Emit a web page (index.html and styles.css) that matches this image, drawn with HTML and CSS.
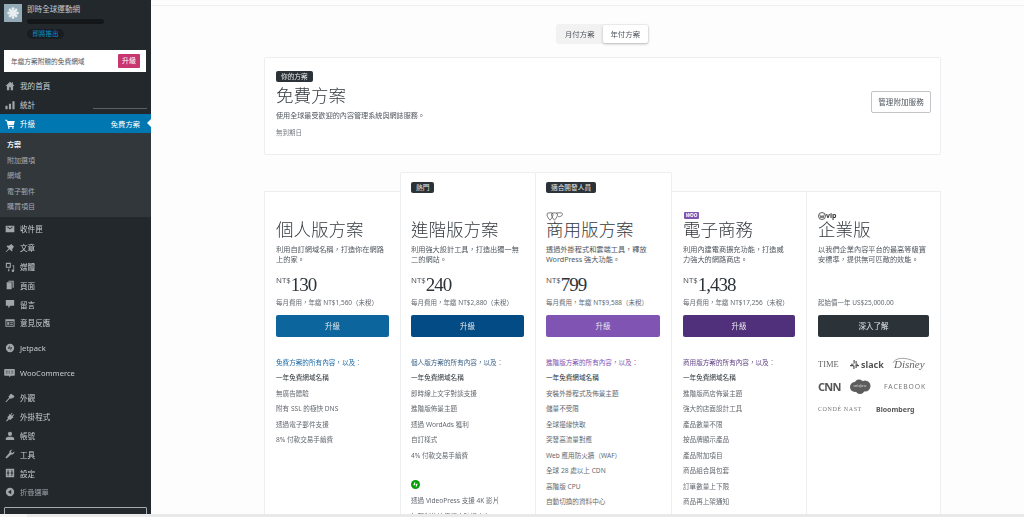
FILE: index.html
```html
<!DOCTYPE html>
<html lang="zh-Hant">
<head>
<meta charset="utf-8">
<title>升級</title>
<link rel="stylesheet" href="styles.css">
</head>
<body>
<div class="app">
<aside class="side">
  <div class="site">
    <div class="site-icon"><svg viewBox="0 0 18 18" width="18" height="18"><circle cx="9" cy="9" r="3.6" fill="#e8edf0"/><g fill="#e8edf0"><circle cx="9" cy="4.6" r="1.4"/><circle cx="9" cy="13.4" r="1.4"/><circle cx="4.6" cy="9" r="1.4"/><circle cx="13.4" cy="9" r="1.4"/><circle cx="5.9" cy="5.9" r="1.3"/><circle cx="12.1" cy="5.9" r="1.3"/><circle cx="5.9" cy="12.1" r="1.3"/><circle cx="12.1" cy="12.1" r="1.3"/></g></svg></div>
    <div class="site-info">
      <div class="site-name">即時全球運動網</div>
      <div class="site-mask"></div>
      <div class="site-pill">即將推出</div>
    </div>
  </div>
  <div class="promo"><span>年繳方案附贈的免費網域</span><b class="promo-btn">升級</b></div>

  <nav class="menu">
    <a class="item"><svg class="ic" viewBox="0 0 12 12"><path d="M6 1 .6 6h1.7v5h2.8V7.6h1.8V11h2.8V6h1.7L9.5 3.8V1.6H8.3v1.1z"/></svg>我的首頁</a>
    <a class="item item-stats"><svg class="ic" viewBox="0 0 12 12"><path d="M.5 7h2.6v4H.5zM4.7 4.500h2.6V11H4.700zM8.900 1.500h2.600V11H8.900z"/></svg>統計<i class="stats-line"></i></a>
    <a class="item item-on"><svg class="ic" viewBox="0 0 12 12"><path d="M.3 1h2.2l.5 1.500h8.700l-1.200 5H4.200l.3 1h6.200v1H3.700L1.800 2H.3z"/><circle cx="4.600" cy="10.700" r="1"/><circle cx="9.400" cy="10.700" r="1"/></svg>升級<span class="item-side">免費方案</span></a>
    <div class="sub">
      <a class="sub-item sub-on">方案</a>
      <a class="sub-item">附加選項</a>
      <a class="sub-item">網域</a>
      <a class="sub-item">電子郵件</a>
      <a class="sub-item">購買項目</a>
    </div>
    <div class="group group-first">
      <a class="item"><svg class="ic" viewBox="0 0 12 12"><path d="M.8 2h10.400v8H.8zM2 3.200 6 6.400l4-3.200H8.600L6 5.200 3.400 3.200z" fill-rule="evenodd"/></svg>收件匣</a>
      <a class="item"><svg class="ic" viewBox="0 0 12 12"><path d="M7.200.8 11.200 4.800 10 5.200 8.600 7.800 9 9.600 7.900 10 5.300 7.400 1.200 11 .8 10.600 4.400 6.500 2 4.100 2.400 3 4.200 3.400 6.800 2z"/></svg>文章</a>
      <a class="item"><svg class="ic" viewBox="0 0 12 12"><path d="M1 1h6v6H1zM2.300 2.300v3.400h3.400V2.300zM9 4h2v6.500a1.500 1.500 0 1 1-1.500-1.500H10V5.200H9zM4 7.700h1.200V11H3.500V10H4z" fill-rule="evenodd"/></svg>媒體</a>
      <a class="item"><svg class="ic" viewBox="0 0 12 12"><path d="M4 .8h6.500v8.600H9V2.200H4zM2 2.800h6V11.200H2z"/></svg>頁面</a>
      <a class="item"><svg class="ic" viewBox="0 0 12 12"><path d="M1 1.200h10v7H6.500L4 11V8.200H1z"/></svg>留言</a>
      <a class="item"><svg class="ic" viewBox="0 0 12 12"><path d="M.5 1.500h11v9H.5zM1.600 3.800v5.600h8.800V3.800zM2.600 5h2.600v3.200H2.600zM6.200 5h3.200v1H6.200zM6.200 7h3.200v1H6.200z" fill-rule="evenodd"/></svg>意見反應</a>
    </div>
    <div class="group">
      <a class="item"><svg class="ic" viewBox="0 0 12 12"><path d="M6 1a5 5 0 1 0 0 10A5 5 0 0 0 6 1zM5.500 2.600v4.200H3.400zM6.500 9.400V5.200h2.100z" fill-rule="evenodd"/></svg>Jetpack</a>
    </div>
    <div class="group">
      <a class="item item-woo"><svg class="ic-woo" viewBox="0 0 12 10"><path d="M1 .6h10a.8.8 0 0 1 .8.8v5.800a.8.8 0 0 1-.8.8H7.400L6 9.600 5.500 8H1a.8.8 0 0 1-.8-.8V1.400a.8.8 0 0 1 .8-.8z"/><path d="M2 3h2M5 3h1.500M8 3h2M2 5h2M5 5h1.500M8 5h2" stroke="#23282d" stroke-width=".7"/></svg>WooCommerce</a>
    </div>
    <div class="group">
      <a class="item"><svg class="ic" viewBox="0 0 12 12"><path d="M7.500.8 11.400 4 9.400 6.500 8.700 5.800 7 7.300 6 6.300 1.500 11.200.6 10.500 5 5.400 4 4.500 5.600 3 5.200 2.500z"/></svg>外觀</a>
      <a class="item"><svg class="ic" viewBox="0 0 12 12"><path d="M8.200 1 9 1.700 7.300 3.600 8.400 4.600 10.200 2.800 11 3.600 9.200 5.500 10.200 6.500 9.500 7.200 9.100 6.900 6.800 9.300 4.600 9 2.300 11.300 1.300 10.600 3.400 8 3 6 5.300 3.500 4.800 3 5.600 2.300 6.500 3.200z"/></svg>外掛程式</a>
      <a class="item"><svg class="ic" viewBox="0 0 12 12"><circle cx="6" cy="3.500" r="2.500"/><path d="M1 8.200 4 6.800h4l3 1.400v2.600H1z"/></svg>帳號</a>
      <a class="item"><svg class="ic" viewBox="0 0 12 12"><path d="M11 2.700 9 4.700 7.500 4.300 7.100 2.800 9 .9A3 3 0 0 0 5.300 4.600L.9 9.600a1 1 0 0 0 1.400 1.400l5-4.400A3 3 0 0 0 11 2.700z"/></svg>工具</a>
      <a class="item"><svg class="ic" viewBox="0 0 12 12"><path d="M1 1h10v10H1zM3.200 2.500v3H2.200v1h1v3h1v-3h1v-1h-1v-3zM7.800 2.500v3H6.800v1h1v3h1v-3h1v-1h-1v-3z" fill-rule="evenodd"/></svg>設定</a>
      <a class="item item-fold"><svg class="ic" viewBox="0 0 12 12"><path d="M6 1a5 5 0 1 0 0 10A5 5 0 0 0 6 1zM7.500 3.200v5.600L3.600 6z" fill-rule="evenodd"/></svg>折疊選單</a>
    </div>
  </nav>
  <div class="side-box"></div>
</aside>

<main class="main">
  <div class="topline"></div>
  <div class="content">
    <div class="toggle-row">
      <div class="toggle"><span class="tog">月付方案</span><span class="tog tog-on">年付方案</span></div>
    </div>

    <section class="current">
      <div>
        <span class="tag">你的方案</span>
        <h1 class="cur-title">免費方案</h1>
        <p class="cur-desc">使用全球最受歡迎的內容管理系統與網誌服務。</p>
        <p class="cur-exp">無到期日</p>
      </div>
      <span class="ghost-btn">管理附加服務</span>
    </section>

    <section class="plans">
      <article class="plan">
        <div class="head"></div>
        <h2 class="plan-name">個人版方案</h2>
        <p class="plan-desc">利用自訂網域名稱&#xFF0C;打造你在網路<br>上的家。</p>
        <div class="price"><sup>NT$</sup>130</div>
        <p class="note">每月費用&#xFF0C;年繳 NT$1,560&#xFF08;未稅&#xFF09;</p>
        <span class="cta cta-1">升級</span>
        <h3 class="fhead fh-1">免費方案的所有內容&#xFF0C;以及&#xFF1A;</h3>
        <ul class="feats">
          <li class="first">一年免費網域名稱</li><li>無廣告體驗</li><li>附有 SSL 的極快 DNS</li><li>透過電子郵件支援</li><li>8% 付款交易手續費</li>
        </ul>
      </article>

      <article class="plan plan-hi">
        <div class="head"><span class="tag">熱門</span></div>
        <h2 class="plan-name">進階版方案</h2>
        <p class="plan-desc">利用強大設計工具&#xFF0C;打造出獨一無<br>二的網站。</p>
        <div class="price"><sup>NT$</sup>240</div>
        <p class="note">每月費用&#xFF0C;年繳 NT$2,880&#xFF08;未稅&#xFF09;</p>
        <span class="cta cta-2">升級</span>
        <h3 class="fhead fh-2">個人版方案的所有內容&#xFF0C;以及&#xFF1A;</h3>
        <ul class="feats">
          <li class="first">一年免費網域名稱</li><li>即時線上文字對談支援</li><li>進階版佈景主題</li><li>透過 WordAds 獲利</li><li>自訂樣式</li><li>4% 付款交易手續費</li>
        </ul>
        <svg class="jp" viewBox="0 0 10 10"><circle cx="5" cy="5" r="5" fill="#069e08"/><path d="M4.600 1.500v4.300H2.400zM5.400 8.500V4.200h2.200z" fill="#fff"/></svg>
        <ul class="feats feats-after">
          <li>透過 VideoPress 支援 4K 影片</li><li>無限制的垃圾留言防護中心</li>
        </ul>
      </article>

      <article class="plan plan-hi">
        <div class="head">
          <span class="tag">適合開發人員</span>
          <svg class="logo-biz" viewBox="0 0 17 9" fill="none" stroke="#444" stroke-width=".7"><path d="M3 .8a2 2 0 0 0-2 2.200C1.300 5 3 7 4 8.200 5 7 6.700 5 7 3 7.200 1.800 6.300.8 5 .8 4.200.8 3.600 1 3 .8z"/><path d="M7.500.8a2 2 0 0 0-2 2.200C5.800 5 7.500 7 8.500 8.200 9.500 7 11.200 5 11.500 3 11.700 1.800 10.800.8 9.500.8 8.700.8 8.100 1 7.500.8z"/><path d="M12 .8c-.9 0-1.600.6-1.900 1.300M12 .8h3c1.200 0 1.800 1 1.400 2-.5 1.300-2.400 2-4.400 2"/></svg>
        </div>
        <h2 class="plan-name">商用版方案</h2>
        <p class="plan-desc">透過外掛程式和雲端工具&#xFF0C;釋放<br>WordPress 強大功能。</p>
        <div class="price"><sup>NT$</sup>799</div>
        <p class="note">每月費用&#xFF0C;年繳 NT$9,588&#xFF08;未稅&#xFF09;</p>
        <span class="cta cta-3">升級</span>
        <h3 class="fhead fh-3">進階版方案的所有內容&#xFF0C;以及&#xFF1A;</h3>
        <ul class="feats">
          <li class="first">一年免費網域名稱</li><li>安裝外掛程式及佈景主題</li><li>儲量不受限</li><li>全球邊緣快取</li><li>突發高流量對應</li><li>Web 應用防火牆&#xFF08;WAF&#xFF09;</li><li>全球 28 處以上 CDN</li><li>高階版 CPU</li><li>自動切換的資料中心</li>
        </ul>
      </article>

      <article class="plan">
        <div class="head"><span class="woo">WOO</span></div>
        <h2 class="plan-name">電子商務</h2>
        <p class="plan-desc">利用內建電商擴充功能&#xFF0C;打造威<br>力強大的網路商店。</p>
        <div class="price"><sup>NT$</sup>1,438</div>
        <p class="note">每月費用&#xFF0C;年繳 NT$17,256&#xFF08;未稅&#xFF09;</p>
        <span class="cta cta-4">升級</span>
        <h3 class="fhead fh-4">商用版方案的所有內容&#xFF0C;以及&#xFF1A;</h3>
        <ul class="feats">
          <li class="first">一年免費網域名稱</li><li>進階版商店佈景主題</li><li>強大的店面設計工具</li><li>產品數量不限</li><li>按品牌顯示產品</li><li>產品附加項目</li><li>商品組合與包套</li><li>訂單數量上下限</li><li>商品再上架通知</li>
        </ul>
      </article>

      <article class="plan plan-ent">
        <div class="head"><span class="vip"><svg viewBox="0 0 8 8" width="8" height="8"><circle cx="4" cy="4" r="3.500" fill="none" stroke="#333" stroke-width=".8"/><path d="M1.800 2.500 3 6l1-2.500L5 6l1.200-3.500" fill="none" stroke="#333" stroke-width=".7"/></svg>vip</span></div>
        <h2 class="plan-name">企業版</h2>
        <p class="plan-desc">以我們企業內容平台的最高等級寶<br>安標準&#xFF0C;提供無可匹敵的效能。</p>
        <div class="price"></div>
        <p class="note">起始價一年 US$25,000.00</p>
        <span class="cta cta-5">深入了解</span>
        <div class="brands">
          <span class="b-time">TIME</span>
          <span class="b-slack"><svg viewBox="0 0 9 9" width="9" height="9" fill="#555"><path d="M3.500 0h1.200v3.500H3.500zM5.500 1h1.200v2.500H5.500zM0 5h3.500v1.200H0zM1 3.700h2.500v1H1zM5.500 5H9v1.200H5.500zM5.500 3.700H8v1H5.500zM4.500 5.500v3.500H3.300V5.500zM6.700 5.500V8H5.500V5.500z"/></svg>slack</span>
          <span class="b-disney"><svg class="disney-arc" viewBox="0 0 32 10" fill="none" stroke="#666" stroke-width=".6"><path d="M1 8C3 3 12 1 24 7"/></svg>Disney</span>
          <span class="b-cnn">CNN</span>
          <span class="b-sf"><svg class="sf-cloud" viewBox="0 0 22 15" fill="#5c5c5c"><circle cx="6" cy="8" r="5"/><circle cx="10" cy="5" r="4.500"/><circle cx="16" cy="7" r="5.500"/><circle cx="11" cy="10.500" r="4.500"/></svg><em>salesforce</em></span>
          <span class="b-fb">FACEBOOK</span>
          <span class="b-conde">CONDÉ NAST</span>
          <span class="b-bloom">Bloomberg</span>
        </div>
      </article>
    </section>
  </div>
</main>
</div>
<div class="bottom"></div>
</body>
</html>
```
FILE: styles.css
```css
* { box-sizing: border-box; }
html, body { margin: 0; height: 517px; overflow: hidden; }
body { background: #fdfdfd; font-family: "Noto Sans", "Noto Sans CJK TC", sans-serif; color: #50575e; font-size: 7px; }
p, h1, h2, h3, ul { margin: 0; padding: 0; }
ul { list-style: none; }

.app { display: flex; height: 517px; filter: blur(.35px); }

/* sidebar */
.side { width: 151px; flex: none; height: 517px; background: #23282d; color: #c8cdd2; overflow: hidden; display: flex; flex-direction: column; }
.site { flex: none; height: 50px; padding: 4px 0 0 4px; display: flex; gap: 5px; }
.site-icon { width: 18px; height: 18px; background: #93aab7; }
.site-info { flex: 1; }
.site-name { font-size: 7.600px; line-height: 11px; color: #c5cacf; white-space: nowrap; }
.site-mask { width: 77px; height: 5px; margin-top: 4px; border-radius: 3px; background: #14171a; }
.site-pill { width: 37px; height: 10px; margin-top: 5px; border-radius: 5px; background: #191d21; color: #0a93c9; font-size: 6.500px; line-height: 10px; text-align: center; }
.promo { flex: none; height: 22px; margin: 0 5px 4px 4px; padding: 0 6px 0 7px; background: #fff; color: #50575e; font-size: 6.700px; display: flex; align-items: center; justify-content: space-between; }
.promo-btn { width: 22px; height: 14px; border-radius: 1px; background: #c9356e; color: #fff; font-size: 7px; font-weight: 400; line-height: 14px; text-align: center; }

.menu { flex: none; display: flex; flex-direction: column; }
.item { position: relative; height: 19px; padding-left: 5px; display: flex; align-items: center; gap: 5px; font-size: 7.600px; color: #c8cdd2; white-space: nowrap; }
.group .item { height: 18.800px; }
.ic { width: 10px; height: 10px; flex: none; fill: #a0a5aa; }
.ic-woo { width: 11px; height: 10px; flex: none; fill: #a0a5aa; margin-left: -1px; }
.stats-line { position: absolute; left: 93px; right: 4px; top: 13px; height: 1px; background: #5b6066; }
.item-on { background: #0077b1; color: #fff; }
.item-on .ic { fill: #fff; }
.item-on::after { content: ""; position: absolute; right: 0; top: 5px; border: 4.500px solid transparent; border-right-color: #fdfdfd; border-left-width: 0; }
.item-side { margin-left: auto; margin-right: 11px; font-size: 7.300px; }
.sub { height: 84px; padding-top: 4px; background: #32373c; }
.sub-item { display: block; height: 15.500px; padding-left: 7px; font-size: 7px; line-height: 15.500px; color: #a5aab0; }
.sub-on { color: #eceef0; font-weight: 700; }
.group { margin-top: 6.200px; }
.group-first { margin-top: 2.600px; }
.item-fold { color: #9aa0a5; font-size: 7.200px; }
.side-box { flex: none; height: 20px; margin: 5.600px 4px 0; border: 1px solid #a5aab0; border-radius: 1px; }

/* main */
.main { flex: 1; min-width: 0; }
.topline { height: 6px; border-bottom: 1px solid #f0f0f0; }
.content { width: 677px; margin-left: 113px; }
.toggle-row { padding-top: 18px; display: flex; justify-content: center; }
.toggle { width: 93px; height: 20px; padding: 1px; border-radius: 3px; background: #f2f2f2; display: flex; justify-content: space-between; }
.tog { flex: 1; font-size: 7.400px; line-height: 18px; text-align: center; color: #50575e; }
.tog-on { background: #fff; border-radius: 2px; box-shadow: 0 1px 3px rgba(0,0,0,.25); }

.current { height: 98px; margin-top: 13px; padding: 13px 9px 0 11px; background: #fff; border: 1px solid #eceeef; border-radius: 2px; display: flex; justify-content: space-between; align-items: flex-start; }
.tag { display: inline-block; height: 11px; padding: 0 5px; border-radius: 2px; background: #2c3338; color: #e8eaeb; font-size: 6.700px; line-height: 11px; white-space: nowrap; }
.cur-title { font-size: 17.500px; line-height: 22px; margin-top: 2px; font-weight: 300; color: #33393e; font-family: "Noto Sans CJK TC", sans-serif; }
.cur-desc { font-size: 7.100px; line-height: 10px; margin-top: 4px; color: #50575e; }
.cur-exp { font-size: 6.500px; line-height: 10px; margin-top: 8px; color: #787c82; }
.ghost-btn { margin-top: 20px; width: 60px; height: 22px; background: #fff; border: 1px solid #c3c4c7; border-radius: 2px; font-size: 7.600px; line-height: 20px; text-align: center; color: #50575e; }

.plans { margin-top: 17px; display: grid; grid-template-columns: 136px 135px 136px 135px 135px; align-items: start; }
.plan { height: 330px; margin-top: 19px; padding: 0 11px; background: #fff; border: 1px solid #eceeef; border-width: 1px 0 0 1px; }
.plan-hi { margin-top: 0; height: 349px; border-width: 1px 1px 0 1px; border-radius: 2px 2px 0 0; margin-right: -1px; position: relative; z-index: 1; padding-left: 10px; }
.plan-ent { border-right-width: 1px; }
.head { height: 26px; position: relative; }
.plan-hi .head { height: 45px; padding-top: 9px; }
.logo-biz { position: absolute; left: 0; top: 39px; width: 17px; height: 9px; }
.woo { position: absolute; left: 1px; top: 20px; width: 15px; height: 7px; border-radius: 1px; background: #7f54b3; color: #fff; font-size: 5px; font-style: italic; font-weight: 700; line-height: 7px; text-align: center; }
.vip { position: absolute; left: 0; top: 20px; display: flex; align-items: center; color: #333; font-size: 7px; font-weight: 700; line-height: 8px; }
.plan-name { font-size: 17.500px; line-height: 22px; font-weight: 300; color: #33393e; white-space: nowrap; font-family: "Noto Sans CJK TC", sans-serif; }
.plan-desc { height: 19px; margin-top: 5px; font-size: 7.200px; line-height: 9.500px; white-space: nowrap; color: #50575e; }
.price { height: 24px; margin-top: 8px; font-family: "Liberation Serif", serif; font-size: 19px; letter-spacing: -1px; line-height: 26px; color: #2c3338; white-space: nowrap; }
.price sup { font-family: "Noto Sans", sans-serif; font-size: 7.800px; letter-spacing: 0; line-height: 0; vertical-align: 8px; color: #50575e; }
.note { height: 9px; margin-top: 2px; font-size: 6.500px; line-height: 9px; white-space: nowrap; color: #646970; }
.cta { display: block; height: 22px; margin-top: 8px; border-radius: 2px; color: #e6e8ea; font-size: 7.500px; line-height: 22px; text-align: center; }
.cta-1 { background: #0d659e; }
.cta-2 { background: #024b84; }
.cta-3 { background: #7f54b3; }
.cta-4 { background: #50307a; }
.cta-5 { background: #2c3338; }
.fhead { margin-top: 21px; height: 10px; font-size: 6.600px; font-weight: 400; line-height: 10px; white-space: nowrap; }
.fh-1 { color: #1d6ba7; }
.fh-2 { color: #3a5f85; }
.fh-3 { color: #7f54b3; }
.fh-4 { color: #5f4185; }
.feats { margin-top: 2px; }
.feats-after { margin-top: 4px; }
.feats li { height: 15.500px; font-size: 6.600px; line-height: 15.500px; white-space: nowrap; color: #646970; }
.feats li.first { color: #2c3338; }
.jp { display: block; width: 9px; height: 9px; margin-top: 17px; }

.brands { margin-top: 16px; display: grid; grid-template-columns: 33px 43px 36px; grid-auto-rows: 22.500px; align-items: center; color: #666; white-space: nowrap; }
.b-time { font-family: "Liberation Serif", serif; font-size: 8.500px; }
.b-slack { display: flex; align-items: center; gap: 2px; font-size: 9px; font-weight: 700; margin-left: -1px; color: #555; }
.b-disney { position: relative; font-family: "Liberation Serif", serif; font-style: italic; font-size: 11px; }
.disney-arc { position: absolute; left: -2px; top: -3px; width: 32px; height: 10px; }
.b-cnn { font-size: 11px; font-weight: 700; letter-spacing: -.8px; color: #555; }
.b-sf { position: relative; width: 22px; height: 15px; margin-left: -2px; color: #ddd; font-size: 3px; line-height: 15px; text-align: center; }
.b-sf em { position: relative; }
.sf-cloud { position: absolute; left: 0; top: 0; width: 22px; height: 15px; }
.b-fb { margin-left: -10px; font-size: 6.800px; letter-spacing: .9px; color: #777; }
.b-conde { grid-column: span 2; font-family: "Liberation Serif", serif; font-size: 6px; letter-spacing: .6px; color: #777; width: 58px; }
.b-bloom { font-size: 7px; font-weight: 700; color: #555; margin-left: -18px; }

.bottom { position: fixed; left: 27px; right: 0; bottom: 0; height: 3px; background: #e9e9e9; }
.bottom::before { content: ""; position: absolute; left: -27px; width: 27px; height: 3px; background: #f5f5f5; }
```
